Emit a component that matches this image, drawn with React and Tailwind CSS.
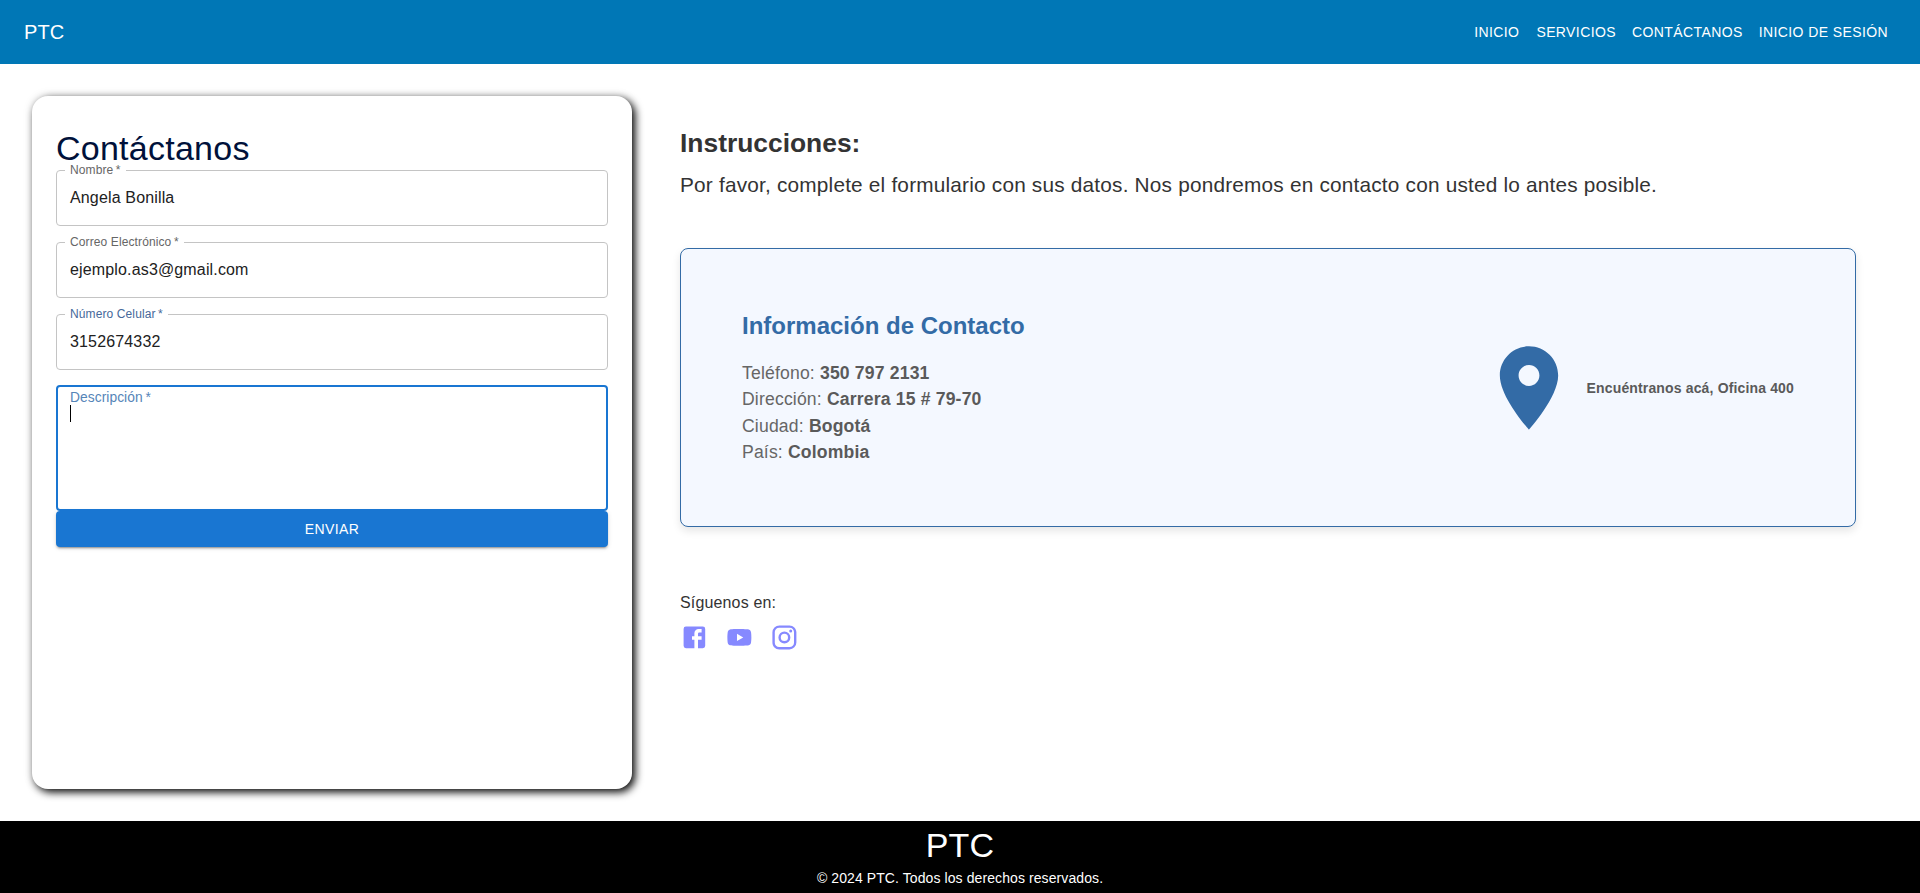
import { BiLogoYoutube } from "react-icons/bi";

const NAV = ["INICIO", "SERVICIOS", "CONTÁCTANOS", "INICIO DE SESIÓN"];

const FIELDS = [
  { label: "Nombre", value: "Angela Bonilla", tone: "text-[#666666]" },
  { label: "Correo Electrónico", value: "ejemplo.as3@gmail.com", tone: "text-[#666666]" },
  { label: "Número Celular", value: "3152674332", tone: "text-[#46699a]" },
];

const CONTACT = [
  ["Teléfono:", "350 797 2131"],
  ["Dirección:", "Carrera 15 # 79-70"],
  ["Ciudad:", "Bogotá"],
  ["País:", "Colombia"],
];

function Field({ label, value, tone }) {
  return (
    <div className="relative flex h-14 items-center rounded border border-[#c4c4c4] px-[13px]">
      <span
        className={`absolute -top-[9px] left-2 bg-white px-[5px] text-[12px] leading-[17px] tracking-[0.00938em] ${tone}`}
      >
        {label}&thinsp;*
      </span>
      <span className="-mt-0.5 text-base leading-[23px] tracking-[0.00938em] text-[#212121]">{value}</span>
    </div>
  );
}

function ContactForm() {
  return (
    <section className="h-[693px] w-[600px] shrink-0 rounded-2xl bg-white p-6 shadow-[3px_3px_8px_#000,0_0_12px_rgba(0,0,0,0.08)]">
      <h1 className="pt-[15px] pb-[9px] text-[34px] leading-[26px] tracking-[0.00735em] text-[#00113a]">
        Contáctanos
      </h1>
      <div className="flex flex-col gap-4">
        {FIELDS.map((f) => (
          <Field key={f.label} {...f} />
        ))}
        <div className="-mt-px h-[126px] rounded border-2 border-[#1976d2] px-3 pt-[3px]">
          <div className="text-[13.8px] leading-4 tracking-[0.004em] text-[#5585b8]">Descripción&thinsp;*</div>
          <div className="-mt-px h-[17px] w-px bg-black" />
        </div>
      </div>
      <button className="block h-9 w-full rounded bg-[#1976d2] text-[14px] font-medium leading-9 tracking-[0.02857em] text-white shadow-[0_3px_1px_-2px_rgba(0,0,0,0.2),0_2px_2px_0_rgba(0,0,0,0.14),0_1px_5px_0_rgba(0,0,0,0.12)]">
        ENVIAR
      </button>
    </section>
  );
}

function FacebookIcon() {
  return (
    <svg viewBox="0 0 24 24" className="size-[28.8px] fill-current">
      <path d="M5 3h14a2 2 0 0 1 2 2v14a2 2 0 0 1-2 2h-4v-7h3v-3h-3V9a1 1 0 0 1 1-1h2V5h-2.500A3.500 3.500 0 0 0 12 8.500V11h-2v3h2v7H5a2 2 0 0 1-2-2V5a2 2 0 0 1 2-2z" />
    </svg>
  );
}

function InstagramIcon() {
  return (
    <svg viewBox="0 0 24 24" className="size-[28.8px] fill-current">
      <path d="M7.8 2h8.4C19.4 2 22 4.6 22 7.8v8.4a5.8 5.8 0 0 1-5.8 5.8H7.8C4.6 22 2 19.4 2 16.2V7.8A5.8 5.8 0 0 1 7.8 2m-.2 2A3.6 3.6 0 0 0 4 7.6v8.8C4 18.39 5.61 20 7.6 20h8.8a3.6 3.6 0 0 0 3.6-3.6V7.6C20 5.61 18.39 4 16.4 4H7.6m9.65 1.5a1.25 1.25 0 0 1 1.25 1.25A1.25 1.25 0 0 1 17.25 8 1.25 1.25 0 0 1 16 6.75a1.25 1.25 0 0 1 1.25-1.25M12 7a5 5 0 0 1 5 5 5 5 0 0 1-5 5 5 5 0 0 1-5-5 5 5 0 0 1 5-5m0 2a3 3 0 0 0-3 3 3 3 0 0 0 3 3 3 3 0 0 0 3-3 3 3 0 0 0-3-3z" />
    </svg>
  );
}

function ContactInfo() {
  return (
    <div className="mt-12 flex h-[279px] items-center justify-between rounded-lg border border-[#336ba6] bg-[#f4f8ff] px-[61px] shadow-[0_4px_8px_rgba(0,0,0,0.1)]">
      <div>
        <h3 className="mb-[18px] text-2xl leading-8 font-bold text-[#336ba6]">Información de Contacto</h3>
        {CONTACT.map(([k, v]) => (
          <p key={k} className="text-[17.6px] leading-[26.4px] tracking-[0.00938em] text-[#666666]">
            {k} <strong className="font-bold text-[#5a5a5a]">{v}</strong>
          </p>
        ))}
      </div>
      <div className="flex items-center gap-2">
        <svg viewBox="0 0 24 24" className="size-[100px] fill-[#336ba6]">
          <path d="M12 2C8.13 2 5 5.13 5 9c0 5.25 7 13 7 13s7-7.75 7-13c0-3.87-3.13-7-7-7m0 9.5c-1.38 0-2.5-1.12-2.5-2.5s1.12-2.5 2.5-2.5 2.5 1.12 2.5 2.5-1.12 2.5-2.5 2.5" />
        </svg>
        <span className="text-[14px] leading-5 font-bold tracking-[0.01071em] text-[#5a5a5a]">
          Encuéntranos acá, Oficina 400
        </span>
      </div>
    </div>
  );
}

export default function App() {
  return (
    <div className="flex h-[893px] flex-col bg-white font-['Liberation_Sans',Arial,sans-serif]">
      <header className="flex h-16 items-center justify-between bg-[#0077b6] pr-8 pl-6 text-white">
        <span className="text-xl leading-8 tracking-[0.0075em]">PTC</span>
        <nav className="flex gap-4">
          {NAV.map((n) => (
            <a key={n} className="text-[14px] leading-6 tracking-[0.02857em] first:mr-px">
              {n}
            </a>
          ))}
        </nav>
      </header>

      <main className="flex flex-1 gap-12 px-8 pt-8">
        <ContactForm />
        <section className="w-[1176px] pt-[27px]">
          <h2 className="text-[26.4px] leading-10 font-bold text-[#333333]">Instrucciones:</h2>
          <p className="mt-1.5 text-[20.8px] leading-[31px] tracking-[0.00938em] text-[#333333]">
            Por favor, complete el formulario con sus datos. Nos pondremos en contacto con usted lo antes posible.
          </p>
          <ContactInfo />
          <p className="mt-16 text-base leading-6 tracking-[0.00938em] text-[#333333]">Síguenos en:</p>
          <div className="mt-2 flex gap-4 text-[#8689ff]">
            <FacebookIcon />
            <BiLogoYoutube className="size-[28.8px]" />
            <InstagramIcon />
          </div>
        </section>
      </main>

      <footer className="flex h-[72px] flex-col items-center bg-black text-white">
        <div className="mt-[3px] text-[34px] leading-[42px] tracking-[0.00735em]">PTC</div>
        <div className="mt-0.5 text-[14px] leading-5 tracking-[0.0065em]">
          © 2024 PTC. Todos los derechos reservados.
        </div>
      </footer>
    </div>
  );
}
